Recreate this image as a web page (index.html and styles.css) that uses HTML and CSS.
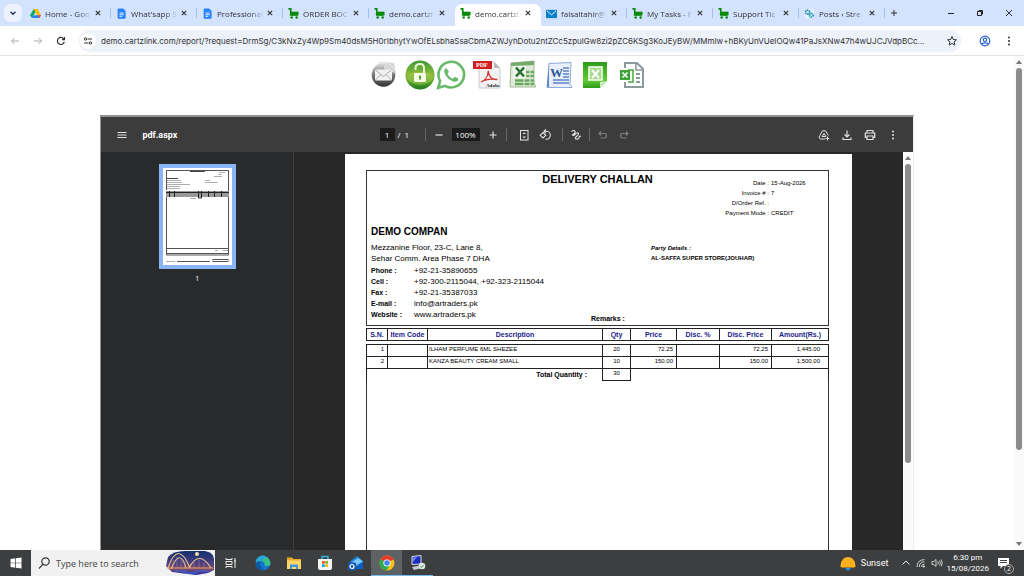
FILE: index.html
```html
<!DOCTYPE html>
<html lang="en">

<head>
    <meta charset="UTF-8">
    <meta name="viewport" content="width=device-width, initial-scale=1.0">
    <title>demo.cartzlink.com</title>
    <link rel="stylesheet" href="styles.css">
</head>

<body>
    <!-- shared icons -->
    <svg class="sprite" width="0" height="0">
        <symbol id="cart" viewBox="0 0 12 12">
            <path d="M0.500 1h2.500v6.500h7.500" fill="none" stroke="#0a8a0a" stroke-width="1.800" />
            <path d="M3 4H11.500V8H3z" fill="#0a8a0a" />
            <circle cx="4" cy="10.300" r="1.400" fill="#0a8a0a" />
            <circle cx="9.500" cy="10.300" r="1.400" fill="#0a8a0a" />
        </symbol>
        <symbol id="doc" viewBox="0 0 12 12">
            <path d="M2.800 0.500h5l2.700 2.700v7.500q0 1-1 1h-6.700q-1 0-1-1v-9.200q0-1 1-1z" fill="#2684fc" />
            <path d="M3.800 5.500h4.600M3.800 7.300h4.600M3.800 9.100h3" stroke="#fff" stroke-width="0.900" />
        </symbol>
        <symbol id="close" viewBox="0 0 8 8">
            <path d="M1.800 1.800l4.400 4.400M6.200 1.800L1.800 6.200" stroke="#333" stroke-width="1.100" />
        </symbol>
    </svg>

    <nav class="tabs">
        <button class="tab-search" aria-label="Search tabs"><svg width="8" height="8" viewBox="0 0 8 8"><path d="M1.500 2.800L4 5.200l2.500-2.400" fill="none" stroke="#1f3050" stroke-width="1.400" /></svg></button>
        <div class="tab">
            <svg class="favicon" viewBox="0 0 12 12"><path d="M4 1h4L4 8 2 11 0 8z" fill="#11a861" /><path d="M4 1h4l4 7H8z" fill="#ffba00" /><path d="M4 8h8l-2 3H2z" fill="#2684fc" /><path d="M8 8h4l-2 3z" fill="#ea4335" /></svg>
            <span class="tab-title">Home - Goo</span>
            <button class="tab-close" aria-label="Close"><svg><use href="#close" /></svg></button>
        </div>
        <div class="tab">
            <svg class="favicon"><use href="#doc" /></svg>
            <span class="tab-title">What'sapp S</span>
            <button class="tab-close" aria-label="Close"><svg><use href="#close" /></svg></button>
        </div>
        <div class="tab">
            <svg class="favicon"><use href="#doc" /></svg>
            <span class="tab-title">Professional</span>
            <button class="tab-close" aria-label="Close"><svg><use href="#close" /></svg></button>
        </div>
        <div class="tab">
            <svg class="favicon"><use href="#cart" /></svg>
            <span class="tab-title">ORDER BOC</span>
            <button class="tab-close" aria-label="Close"><svg><use href="#close" /></svg></button>
        </div>
        <div class="tab before-active">
            <svg class="favicon"><use href="#cart" /></svg>
            <span class="tab-title">demo.cartzl</span>
            <button class="tab-close" aria-label="Close"><svg><use href="#close" /></svg></button>
        </div>
        <div class="tab active">
            <svg class="favicon"><use href="#cart" /></svg>
            <span class="tab-title">demo.cartzl</span>
            <button class="tab-close" aria-label="Close"><svg><use href="#close" /></svg></button>
        </div>
        <div class="tab">
            <svg class="favicon" viewBox="0 0 12 12"><rect y="2" width="12" height="9" fill="#0c7fc9" /><path d="M1 3l5 4.500L11 3" fill="none" stroke="#fff" /></svg>
            <span class="tab-title">faisaltahir@</span>
            <button class="tab-close" aria-label="Close"><svg><use href="#close" /></svg></button>
        </div>
        <div class="tab">
            <svg class="favicon"><use href="#cart" /></svg>
            <span class="tab-title">My Tasks - F</span>
            <button class="tab-close" aria-label="Close"><svg><use href="#close" /></svg></button>
        </div>
        <div class="tab">
            <svg class="favicon"><use href="#cart" /></svg>
            <span class="tab-title">Support Tic</span>
            <button class="tab-close" aria-label="Close"><svg><use href="#close" /></svg></button>
        </div>
        <div class="tab">
            <svg class="favicon" viewBox="0 0 12 12"><path d="M1 1h8l2 2v8H1z" fill="#e8f3f8" /><circle cx="4" cy="4.500" r="2.200" fill="none" stroke="#1d8cb5" stroke-width="2" stroke-dasharray="1.500 0.600" /><circle cx="8" cy="8" r="2" fill="none" stroke="#2b9fc7" stroke-width="2" stroke-dasharray="1.500 0.600" /></svg>
            <span class="tab-title">Posts ‹ Stre</span>
            <button class="tab-close" aria-label="Close"><svg><use href="#close" /></svg></button>
        </div>
        <button class="new-tab" aria-label="New tab"><svg width="10" height="10" viewBox="0 0 10 10"><path d="M5 2v6M2 5h6" stroke="#333" /></svg></button>
        <div class="window-buttons">
            <button aria-label="Minimize"><svg width="8" height="8" viewBox="0 0 8 8"><path d="M1 4.500h6" stroke="#222" /></svg></button>
            <button aria-label="Restore"><svg width="8" height="8" viewBox="0 0 8 8"><path d="M1.500 2.500h4v4h-4zM3 2.500v-1h3.500V5H5.500" fill="none" stroke="#222" /></svg></button>
            <button aria-label="Close window"><svg width="8" height="8" viewBox="0 0 8 8"><path d="M1 1l6 6M7 1L1 7" stroke="#222" stroke-width="0.900" /></svg></button>
        </div>
    </nav>

    <header class="toolbar">
        <button aria-label="Back"><svg width="10" height="10" viewBox="0 0 10 10"><path d="M9 5H1.500M4.500 2L1.500 5l3 3" fill="none" stroke="#aaa" /></svg></button>
        <button aria-label="Forward"><svg width="10" height="10" viewBox="0 0 10 10"><path d="M1 5h7.500M5.500 2l3 3-3 3" fill="none" stroke="#aaa" /></svg></button>
        <button aria-label="Reload"><svg width="10" height="10" viewBox="0 0 10 10"><path d="M8.300 6a3.500 3.500 0 1 1-.600-3.200M8.500 1v2.600H5.900" fill="none" stroke="#333" stroke-width="1.200" /></svg></button>
        <div class="address">
            <button class="site-info" aria-label="Site information"><svg width="10" height="10" viewBox="0 0 10 10"><path d="M4.500 3H9M1 7h4.500" stroke="#333" stroke-width="1.100" /><circle cx="2.500" cy="3" r="1.200" fill="none" stroke="#333" /><circle cx="7.500" cy="7" r="1.200" fill="none" stroke="#333" /></svg></button>
            <input type="text" aria-label="Address" value="demo.cartzlink.com/report/?request=DrmSg/C3kNxZy4Wp9Sm40dsM5H0rIbhytYwOfELsbhaSsaCbmAZWJyhDotu2ntZCc5zpulGw8zi2pZC6KSg3KoJEyBW/MMmIw+hBKyUnVUeIOQw41PaJsXNw47h4wUJCJVdpBCc...">
            <button aria-label="Bookmark"><svg width="12" height="12" viewBox="0 0 12 12"><path d="M6 1.500l1.300 3 3.200.300-2.400 2.100.700 3.200L6 8.400l-2.800 1.700.700-3.200L1.500 4.800l3.200-.300z" fill="none" stroke="#333" /></svg></button>
        </div>
        <button class="profile" aria-label="Profile"><svg width="12" height="12" viewBox="0 0 12 12"><g fill="none" stroke="#2a62d0" stroke-width="1.200"><circle cx="6" cy="6" r="4.800" /><circle cx="6" cy="4.800" r="1.700" /><path d="M2.700 9q3.300-2.400 6.600 0" /></g></svg></button>
        <button aria-label="Menu"><svg width="10" height="10" viewBox="0 0 10 10" fill="#333"><circle cx="5" cy="1.500" r="1" /><circle cx="5" cy="5" r="1" /><circle cx="5" cy="8.500" r="1" /></svg></button>
    </header>

    <main class="content">
        <div class="report">
            <div class="export-bar">
                <button aria-label="E-mail">
                    <svg viewBox="0 0 30 30">
                        <defs><linearGradient id="grey" x2="0" y2="1"><stop offset="0" stop-color="#ddd" /><stop offset="0.500" stop-color="#777" /><stop offset="1" stop-color="#333" /></linearGradient></defs>
                        <path d="M10 2l15 1 2 12-8 2z" fill="#d4d4d4" />
                        <circle cx="14.500" cy="15" r="12.500" fill="#efefef" />
                        <circle cx="14.500" cy="15" r="11.700" fill="url(#grey)" />
                        <path d="M15 3.300q8 0 11 10L15 9z" fill="#d8d8d8" />
                        <rect x="6" y="9.500" width="17" height="11" rx="1" fill="#f1f1f1" />
                        <path d="M6.500 10l8 6.500 8-6.500M6.500 20l5.500-5.500M22.500 20L17 14.500" fill="none" stroke="#aaa" />
                    </svg>
                </button>
                <button class="joined" aria-label="Unlock">
                    <svg viewBox="0 0 30 30">
                        <defs><linearGradient id="lime" x2="0" y2="1"><stop offset="0" stop-color="#3f9a35" /><stop offset="0.450" stop-color="#86b838" /><stop offset="0.700" stop-color="#5ca52a" /><stop offset="1" stop-color="#1d7a1e" /></linearGradient></defs>
                        <circle cx="15" cy="15" r="14.500" fill="url(#lime)" />
                        <path d="M1.500 16q13-9 27 0a13.500 9 0 0 1-27 0z" fill="#b4d65a" opacity="0.400" />
                        <path d="M10.500 10V8q0-4 4.500-4 4 0 4 4v5" fill="none" stroke="#e9f6d5" stroke-width="2" />
                        <rect x="9" y="13" width="12" height="9" rx="1" fill="#f3fae6" />
                        <path d="M15 15.500v4" stroke="#5aa32a" stroke-width="2" />
                    </svg>
                </button>
                <button aria-label="WhatsApp">
                    <svg viewBox="0 0 30 30">
                        <path d="M2.200 27.800l1.900-6.900a12.800 12.800 0 1 1 4.900 4.900z" fill="#fff" stroke="#67b868" stroke-width="2.600" />
                        <path d="M10.500 8.200c-2.500.600-2.800 3.200-1.500 5.800 2 4 5 6.600 9 7.700 2.500.500 4.200-.800 4.300-3.200l-3.500-1.800-1.900 2c-2.500-.900-4.300-2.600-5.400-5l1.400-1.900z" fill="#67b868" />
                    </svg>
                </button>
                <button aria-label="PDF">
                    <svg viewBox="0 0 30 30">
                        <path d="M7 2h15l6 6v20H7z" fill="#f3f3f3" stroke="#ccc" />
                        <path d="M22 2l6 6h-6z" fill="#bbb" />
                        <rect x="1" y="1" width="19" height="8" fill="#cf1f1f" />
                        <text x="4" y="7" class="pdf-mark">PDF</text>
                        <path d="M9 22c4-1.500 7-6 7.300-11 .200 5 3 8.500 9 8.500-6-.800-12-.200-16.300 2.500z" fill="none" stroke="#d23030" stroke-width="1.300" />
                        <text x="14" y="27" class="adobe-mark">Adobe</text>
                    </svg>
                </button>
                <button aria-label="Excel">
                    <svg viewBox="0 0 30 30">
                        <path d="M3 3l23-2v22l2 4H2z" fill="#dfead8" stroke="#9fbd91" />
                        <path d="M3 3l23-2v4L3 6z" fill="#76a76a" />
                        <path d="M18 12h8M18 16h8M7 20.500h19M7 24h19" stroke="#6ba85e" stroke-width="2.600" />
                        <path d="M22 10v16M16 19v7" stroke="#dfead8" />
                        <rect x="5" y="6" width="13" height="12" fill="#eef5ea" />
                        <path d="M8 7.500l8 9M16 7.500l-8 9" stroke="#2c7035" stroke-width="2.600" />
                    </svg>
                </button>
                <button aria-label="Word">
                    <svg viewBox="0 0 30 30">
                        <path d="M5 3.500l22-1-1 22 2 3H3z" fill="#e8effa" stroke="#8fa9d8" />
                        <path d="M5 4v23H3z" fill="#5b82c4" />
                        <path d="M19 8h6M19 11h6M19 14h6M19 17h6M9 20h16M9 23h16" stroke="#5f83c6" stroke-width="1.400" />
                        <path d="M6 6h13v12H6z" fill="#e8effa" />
                        <text x="6" y="17" class="word-mark">W</text>
                    </svg>
                </button>
                <button aria-label="Excel sheet">
                    <svg viewBox="0 0 30 30">
                        <defs><linearGradient id="green" x2="0" y2="1"><stop offset="0" stop-color="#2c9b1c" /><stop offset="0.700" stop-color="#62cc34" /><stop offset="1" stop-color="#2c9b1c" /></linearGradient></defs>
                        <path d="M3 2h24v19l-7 7H3z" fill="url(#green)" />
                        <path d="M20 28v-6l7-1z" fill="#cdeec0" />
                        <rect x="9" y="7" width="13" height="13" fill="#a5dc90" stroke="#f3fbef" stroke-width="1.600" />
                        <path d="M12 10l7 8M19 10l-7 8" stroke="#fff" stroke-width="2" />
                    </svg>
                </button>
                <button aria-label="Excel data">
                    <svg viewBox="0 0 30 30">
                        <path d="M9 8V3h12l6 6v18H9v-5" fill="#fff" stroke="#8b9a9d" stroke-width="2" />
                        <path d="M20 3v7h7" fill="none" stroke="#8b9a9d" stroke-width="1.600" />
                        <path d="M20 14h4M20 18h4M20 22h4" stroke="#8b9a9d" stroke-width="2" />
                        <path d="M12 10h5v12h-5" fill="none" stroke="#45a83c" stroke-width="1.500" />
                        <rect x="4" y="10" width="10" height="10" fill="#3da437" />
                        <path d="M6.500 12.500l5 5M11.500 12.500l-5 5" stroke="#fff" stroke-width="1.600" />
                    </svg>
                </button>
            </div>

            <section class="viewer">
                <div class="viewer-bar">
                    <div class="viewer-name">
                        <button aria-label="Sidebar"><svg viewBox="0 0 12 12"><path d="M1.500 3.500h9M1.500 6h9M1.500 8.500h9" stroke="#e3e3e3" /></svg></button>
                        <span>pdf.aspx</span>
                    </div>
                    <div class="viewer-controls">
                        <input class="page-number" type="text" aria-label="Page" value="1">
                        <span class="page-count">/ &nbsp;1</span>
                        <span class="sep"></span>
                        <button aria-label="Zoom out"><svg viewBox="0 0 12 12"><path d="M2.500 6h7" stroke="#e3e3e3" stroke-width="1.200" /></svg></button>
                        <input class="zoom-level" type="text" aria-label="Zoom" value="100%">
                        <button aria-label="Zoom in"><svg viewBox="0 0 12 12"><path d="M2.500 6h7M6 2.500v7" stroke="#e3e3e3" stroke-width="1.200" /></svg></button>
                        <span class="sep"></span>
                        <button class="fit" aria-label="Fit to page"><svg viewBox="0 0 12 12"><rect x="2.500" y="1.500" width="7.500" height="9.500" fill="none" stroke="#e3e3e3" /><path d="M4.500 5L6.200 3.200 8 5zM4.500 7.500l1.700 1.800L8 7.500z" fill="#e3e3e3" /></svg></button>
                        <button class="rotate" aria-label="Rotate"><svg viewBox="0 0 12 12"><path d="M4 3.500L6.800 6.300 4 9 1.200 6.300z" fill="none" stroke="#e3e3e3" stroke-width="1.100" /><path d="M5 2.300h2.300a4 4 0 0 1 0 8H6.500M6.800.500L5 2.300l1.800 1.800" fill="none" stroke="#e3e3e3" stroke-width="1.100" /></svg></button>
                        <span class="sep wide"></span>
                        <button aria-label="Draw"><svg viewBox="0 0 12 12"><path d="M1.500 2.500q3-2 3.500 0T2.500 5.800q.500 1.500 3-.800t3-.500q.500 1-2 3t0 2.500 2.500-1.500 2-1" fill="none" stroke="#e3e3e3" stroke-width="1.100" /></svg></button>
                        <span class="sep"></span>
                        <button class="dim" aria-label="Undo"><svg viewBox="0 0 12 12"><path d="M4 2.500L2 4.500l2 2M2 4.500h5.500q2 0 2 2.200t-2 2.300H3.500" fill="none" stroke="#e3e3e3" stroke-width="1.100" /></svg></button>
                        <button class="dim redo" aria-label="Redo"><svg viewBox="0 0 12 12"><path d="M8 2.500l2 2-2 2M10 4.500H4.500q-2 0-2 2.200t2 2.300h4" fill="none" stroke="#e3e3e3" stroke-width="1.100" /></svg></button>
                    </div>
                    <div class="viewer-actions">
                        <button aria-label="Save to Drive"><svg viewBox="0 0 12 12"><path d="M7 10H2.200L1 8l3.500-6.200h3L10.300 6.500M4 7.800l2-3.500L7.800 7.500H4M9.500 7.500v4M7.500 9.500h4" fill="none" stroke="#e3e3e3" /></svg></button>
                        <button aria-label="Download"><svg viewBox="0 0 12 12"><path d="M6 1.500V8M3.500 5.500L6 8l2.500-2.500M2 8.500v2h8v-2" fill="none" stroke="#e3e3e3" stroke-width="1.200" /></svg></button>
                        <button aria-label="Print"><svg viewBox="0 0 12 12"><path d="M3 4V1.500h6V4M3 8.500H1.300V4h9.400v4.500H9M3 7h6v3.500H3z" fill="none" stroke="#e3e3e3" stroke-width="1.200" /></svg></button>
                        <button aria-label="More"><svg viewBox="0 0 12 12" fill="#e3e3e3"><circle cx="6" cy="2.500" r="1" /><circle cx="6" cy="6" r="1" /><circle cx="6" cy="9.500" r="1" /></svg></button>
                    </div>
                </div>

                <div class="viewer-body">
                    <aside class="thumbs">
                        <button class="thumb" aria-label="Page 1">
                            <svg viewBox="0 0 69 97">
                                <rect width="69" height="97" fill="#fff" />
                                <g fill="none" stroke="#555">
                                    <path d="M3.500 22V2.500h62V23M3.500 23v64h62V23" />
                                    <path d="M3 80.500h63M3 85.500h63" />
                                    <path d="M14 93.500h33" />
                                    <rect x="50" y="91.500" width="15" height="2" />
                                </g>
                                <rect x="3" y="23" width="63" height="6" fill="#999" />
                                <path d="M3 24.500h63M6.500 23v6M11.500 23v6M35.500 23v7h3v-7M45.500 23v6M51.500 23v6M58.500 23v6" stroke="#222" fill="none" />
                                <path d="M27 3.500h15M4 10.500h11" stroke="#444" />
                                <path d="M56 4.500h6M55 6.500h4M51 8.500h8M42 12.500h5M42 14.500h13M4 12.500h14M4 14.500h15M4 16.500h23M4 18.500h13M4 20.500h13M27 30.500h6M52 82.500h3M60 82.500h5M3 93.500h9" stroke="#999" stroke-width="0.800" />
                            </svg>
                        </button>
                        <span>1</span>
                    </aside>

                    <div class="pages">
                        <article class="page">
                            <div class="challan">
                                <div class="challan-top">
                                    <h1>DELIVERY CHALLAN</h1>
                                    <dl class="meta">
                                        <dt>Date :</dt><dd>15-Aug-2026</dd>
                                        <dt>Invoice # :</dt><dd>7</dd>
                                        <dt>D/Order Ref. :</dt><dd></dd>
                                        <dt>Payment Mode :</dt><dd>CREDIT</dd>
                                    </dl>
                                </div>
                                <div class="challan-info">
                                    <div class="company">
                                        <h2>DEMO COMPAN</h2>
                                        <p>Mezzanine Floor, 23-C, Lane 8,<br>Sehar Comm. Area Phase 7 DHA</p>
                                        <dl>
                                            <dt>Phone :</dt><dd>+92-21-35890655</dd>
                                            <dt>Cell :</dt><dd>+92-300-2115044, +92-323-2115044</dd>
                                            <dt>Fax :</dt><dd>+92-21-35387033</dd>
                                            <dt>E-mail :</dt><dd>info@artraders.pk</dd>
                                            <dt>Website :</dt><dd>www.artraders.pk</dd>
                                        </dl>
                                    </div>
                                    <div class="remarks">Remarks :</div>
                                    <div class="party">
                                        <em>Party Details :</em>
                                        <strong>AL-SAFFA SUPER STORE(JOUHAR)</strong>
                                    </div>
                                </div>
                            </div>

                            <table class="items">
                                <colgroup>
                                    <col class="c-sn"><col class="c-code"><col><col class="c-qty"><col class="c-price"><col class="c-disc"><col class="c-dprice"><col class="c-amount">
                                </colgroup>
                                <thead>
                                    <tr><th>S.N.</th><th>Item Code</th><th>Description</th><th>Qty</th><th>Price</th><th>Disc. %</th><th>Disc. Price</th><th>Amount(Rs.)</th></tr>
                                </thead>
                                <tbody>
                                    <tr class="gap"><td colspan="8"></td></tr>
                                    <tr><td class="num">1</td><td></td><td>ILHAM PERFUME 6ML SHEZEE</td><td class="qty">20</td><td class="num">72.25</td><td></td><td class="num">72.25</td><td class="num amount">1,445.00</td></tr>
                                    <tr><td class="num">2</td><td></td><td>KANZA BEAUTY CREAM SMALL</td><td class="qty">10</td><td class="num">150.00</td><td></td><td class="num">150.00</td><td class="num amount">1,500.00</td></tr>
                                </tbody>
                                <tfoot>
                                    <tr><th colspan="3">Total Quantity :</th><td class="qty">30</td><td colspan="4" class="rest"></td></tr>
                                </tfoot>
                            </table>
                            <div class="blank"></div>
                        </article>
                    </div>
                    <div class="scrollbar"><i class="up"></i><i class="bar"></i></div>
                </div>
            </section>
        </div>
        <div class="scrollbar page-scroll"><i class="up"></i><i class="bar"></i><i class="down"></i></div>
    </main>

    <footer class="taskbar">
        <button class="start" aria-label="Start"><svg width="12" height="12" viewBox="0 0 12 12" fill="#fff"><path d="M.500 2l4.800-.700v4.400H.500zM6 1.200L11.500.400v5.300H6zM.500 6.300h4.800v4.400L.500 10zM6 6.300h5.500v5.300L6 10.800z" /></svg></button>
        <div class="search">
            <svg width="14" height="14" viewBox="0 0 14 14"><circle cx="8.500" cy="5.500" r="3.700" fill="none" stroke="#333" stroke-width="1.200" /><path d="M6 8.200L2 12.500" stroke="#333" stroke-width="1.200" /></svg>
            <input type="text" aria-label="Search" placeholder="Type here to search">
            <svg class="bridge" viewBox="0 0 50 24">
                <defs><linearGradient id="dusk" x2="0" y2="1"><stop offset="0" stop-color="#14306e" /><stop offset="0.500" stop-color="#4a3f83" /><stop offset="0.750" stop-color="#7b4a66" /><stop offset="1" stop-color="#1b2cac" /></linearGradient></defs>
                <path d="M3 6Q8 0 20 0h20q9 2 9 8v11l-6 3-12 2-24-3-6-6z" fill="url(#dusk)" />
                <circle cx="32" cy="3" r="2" fill="#f5dca8" />
                <path d="M3 17Q13-12 25 17M24 17Q34-2 46 17M6 18q9-22 15-1" fill="none" stroke="#e9c08b" stroke-width="1.200" />
                <path d="M8 9v8M12 6v11M16 7v10M20 10v7M29 11v6M34 9v8M39 11v6" stroke="#b58a8a" stroke-width="0.500" />
                <path d="M2 17h46" stroke="#e8a36f" stroke-width="1.200" />
                <path d="M10 20h12M18 22h14M30 20h14" stroke="#4667e0" />
            </svg>
        </div>
        <button class="app task-view" aria-label="Task view"><svg viewBox="0 0 16 16" fill="none" stroke="#eee"><path d="M3 3v1.500h6V3M3 13v-1.500h6V13M3 6.500h6v3H3zM12 3v2M12 7v6" /><path d="M11 6h2" stroke-width="1.600" /></svg></button>
        <button class="app" aria-label="Edge"><svg viewBox="0 0 16 16"><circle cx="8" cy="8" r="7.500" fill="#1674c9" /><path d="M.700 7A7.500 7.500 0 0 1 15.500 8q0 3-3.500 3-3 0-2.500-2 0-3-4-3-3.500 0-4.800 1z" fill="#39c08a" /><path d="M.700 7A7.500 7.500 0 0 1 11 1.200L7 5.800q-4-.500-6.300 1.200z" fill="#2aa6d8" /><path d="M5.500 7q-2 5 4 7.500Q2 16 1 9q1-3 4.500-2z" fill="#0c59a4" /></svg></button>
        <button class="app" aria-label="Explorer"><svg viewBox="0 0 16 16"><path d="M1 2.500h5l1.500 1.500H15v10H1z" fill="#e9a825" /><path d="M1 5.500h14V14H1z" fill="#ffd766" /><path d="M4 14V9.500h8V14h-2v-2H6v2z" fill="#3e9ade" /></svg></button>
        <button class="app" aria-label="Store"><svg viewBox="0 0 16 16"><path d="M5 4V1.500h6V4" fill="none" stroke="#3bb4e5" stroke-width="1.500" /><path d="M1 4h14v9q0 2-2 2H3q-2 0-2-2z" fill="#f4f4f4" /><path d="M5 6h2.700v2.700H5z" fill="#f25022" /><path d="M8.300 6H11v2.700H8.300z" fill="#7fba00" /><path d="M5 9.300h2.700V12H5z" fill="#00a4ef" /><path d="M8.300 9.300H11V12H8.300z" fill="#ffb900" /></svg></button>
        <button class="app" aria-label="Outlook"><svg viewBox="0 0 16 16"><path d="M2 6.500l7-5.500 6 5v8H3z" fill="#1c86e0" /><path d="M3 8l7-5 5 3.500-8 4.500z" fill="#7cc8f8" /><path d="M15 6.500V14H5z" fill="#0f5fc0" /><rect y="7.500" width="8" height="8" rx="1" fill="#1257ad" /><circle cx="4" cy="11.500" r="2" fill="none" stroke="#fff" stroke-width="1.200" /></svg></button>
        <button class="app current" aria-label="Chrome"><svg viewBox="0 0 16 16"><circle cx="8" cy="8" r="7.500" fill="#fbc116" /><path d="M8 8L1.500 4.200A7.500 7.500 0 0 1 14.500 4.200z" fill="#e33b2e" /><path d="M8 8L1.500 4.200A7.500 7.500 0 0 0 7.500 15.500l3-5z" fill="#2da94f" /><path d="M8 4.200h6.500" stroke="#e33b2e" /><circle cx="8" cy="8" r="3.600" fill="#fff" /><circle cx="8" cy="8" r="2.800" fill="#4285f4" /></svg></button>
        <button class="app running" aria-label="Remote desktop"><svg viewBox="0 0 16 16"><path d="M2 1.500l9-1v8.500L2 9.500z" fill="#1c2fb8" stroke="#d8dce8" /><path d="M3 2.500l4-.500-4 5z" fill="#6d87ee" /><path d="M2 12l8-1.500 2 2.500-8 2z" fill="#c6cad2" /><circle cx="12" cy="11" r="3.300" fill="#dfe9df" /><path d="M10.300 11.500l1.200 1 2.200-2.500" fill="none" stroke="#4f9050" /></svg></button>

        <div class="tray">
            <button class="weather"><svg width="16" height="16" viewBox="0 0 16 16"><path d="M.500 10.500a7.500 8.500 0 0 1 15 0q0 2-1 2h-13q-1 0-1-2z" fill="#fdb11c" /><path d="M5 13h6l-3 3z" fill="#1e90e8" /></svg>Sunset</button>
            <button aria-label="Hidden icons"><svg width="10" height="10" viewBox="0 0 10 10"><path d="M1.500 6.500L5 3l3.500 3.500" fill="none" stroke="#eee" /></svg></button>
            <button aria-label="Network"><svg width="10" height="10" viewBox="0 0 10 10" fill="none" stroke="#ddd" stroke-width="0.900"><path d="M1 9q0-7 7.500-7.500M3.300 9q0-5 5.200-5.300M5.500 9q0-2.800 3-3" /><circle cx="7.800" cy="8.500" r="0.700" fill="#eee" /></svg></button>
            <button aria-label="Volume"><svg width="12" height="10" viewBox="0 0 12 10" fill="none" stroke="#ddd"><path d="M1 3.500h1.800L5 1.500v7l-2.200-2H1zM6.800 3.500q1 1.500 0 3M8.500 2.500q1.800 2.500 0 5M10.200 1.500q2 3.500 0 7" stroke-width="0.900" /></svg></button>
            <button class="clock">6:30 pm<br>15/08/2026</button>
            <button class="notify" aria-label="Notifications"><svg width="14" height="14" viewBox="0 0 14 14"><path d="M1 2h11v8H6l-2.500 2.500V10H1z" fill="#fff" /><path d="M3 4.500h7M3 6.500h7" stroke="#444" /></svg><span class="badge">2</span></button>
        </div>
    </footer>
</body>

</html>
```
FILE: styles.css
```css
* {
    box-sizing: border-box;
}

body {
    display: flex;
    flex-direction: column;
    height: 100vh;
    margin: 0;
    overflow: hidden;
    font-family: "Open Sans", "Noto Sans", sans-serif;
    font-size: 8px;
    color: #333;
    background-color: #fff;
}

button {
    display: flex;
    align-items: center;
    justify-content: center;
    padding: 0;
    border: none;
    background: none;
    color: inherit;
    font: inherit;
    cursor: pointer;
}

input {
    min-width: 0;
    padding: 0;
    border: none;
    outline: none;
    background: none;
    color: inherit;
    font: inherit;
}

svg {
    display: block;
    flex: none;
}

dl, dd, p, h1, h2 {
    margin: 0;
}

.sprite {
    position: absolute;
}

/* browser tabs */
.tabs {
    display: flex;
    align-items: flex-end;
    height: 26px;
    padding-left: 4px;
    background-color: #d3e2fd;
}

.tab-search {
    width: 18px;
    height: 18px;
    margin: 0 3px 4px 0;
    border-radius: 6px;
    background-color: #ecf3fe;
}

.tab {
    display: flex;
    align-items: center;
    width: 86px;
    height: 22px;
    padding: 0 8px 4px 5px;
}

.tab::after {
    content: "";
    width: 1px;
    height: 10px;
    margin-right: -8px;
    margin-left: 8px;
    background-color: #9fc1f5;
}

.tab.active {
    border-radius: 7px 7px 0 0;
    background-color: #fff;
}

.tab.active::after,
.tab.before-active::after {
    background-color: transparent;
}

.favicon {
    width: 11px;
    height: 11px;
}

.tab-title {
    flex: 1;
    min-width: 0;
    margin: 0 2px 0 4px;
    white-space: nowrap;
    -webkit-mask-image: linear-gradient(to right, #000 70%, transparent);
    mask-image: linear-gradient(to right, #000 70%, transparent);
}

.tab-close svg {
    width: 8px;
    height: 8px;
}

.new-tab {
    width: 18px;
    height: 18px;
    margin-bottom: 4px;
}

.window-buttons {
    display: flex;
    gap: 21px;
    margin: 0 11px 9px auto;
}

/* address bar */
.toolbar {
    display: flex;
    align-items: center;
    gap: 13px;
    height: 30px;
    padding: 0 10px;
    border-bottom: 1px solid #e4e4e4;
}

.address {
    display: flex;
    flex: 1;
    align-items: center;
    height: 22px;
    padding: 0 3px 0 1px;
    border-radius: 11px;
    background-color: #ecf1fa;
}

.address input {
    flex: 1;
    margin: 0 3px 0 5px;
    font-family: Inter, Roboto, sans-serif;
}

.site-info {
    width: 16px;
    height: 16px;
    border-radius: 8px;
    background-color: #fff;
}

.profile {
    margin-left: 5px;
}

/* page */
.content {
    display: flex;
    flex: 1;
    min-height: 0;
}

.report {
    display: flex;
    flex: 1;
    flex-direction: column;
    align-items: center;
    min-height: 0;
}

.export-bar {
    display: flex;
    gap: 6px;
    padding: 4px 0 25px;
}

.export-bar svg {
    width: 30px;
    height: 30px;
}

.export-bar .joined {
    margin-right: -5px;
}

.pdf-mark {
    font: bold 6px "Liberation Serif", serif;
    fill: #fff;
}

.adobe-mark {
    font: bold 5px "Liberation Serif", serif;
    fill: #222;
}

.word-mark {
    font: bold 13px "Liberation Serif", serif;
    fill: #2b5797;
}

/* pdf viewer */
.viewer {
    display: flex;
    flex: 1;
    flex-direction: column;
    box-sizing: content-box;
    width: 80%;
    min-height: 0;
    border: solid #8f9492;
    border-width: 2px 1px 0 1px;
    border-right-color: #eee;
}

.viewer-bar {
    display: grid;
    grid-template-columns: 1fr auto 1fr;
    align-items: center;
    height: 35px;
    padding: 0 14px 0 15px;
    background-color: #3c3c3c;
    color: #fff;
}

.viewer-bar svg {
    width: 12px;
    height: 12px;
}

.viewer-name {
    display: flex;
    align-items: center;
    gap: 14px;
    font-family: Roboto, sans-serif;
    font-size: 9px;
    font-weight: bold;
}

.viewer-controls {
    display: flex;
    align-items: center;
    gap: 7px;
    margin-right: 6px;
}

.viewer-controls input {
    height: 13px;
    background-color: #1c1c1c;
    text-align: center;
}

.page-number {
    width: 15px;
}

.zoom-level {
    width: 28px;
}

.page-count {
    width: 20px;
    margin-left: -4px;
}

.sep {
    width: 1px;
    height: 13px;
    background-color: #666;
}

.sep.wide,
.fit {
    margin-left: 4px;
}

.rotate,
.redo {
    margin-left: 2px;
}

.dim {
    opacity: 0.4;
}

.viewer-actions {
    display: flex;
    justify-content: flex-end;
    gap: 11px;
}

.viewer-body {
    display: flex;
    flex: 1;
    min-height: 0;
    background-color: #282828;
}

.thumbs {
    display: flex;
    flex: none;
    flex-direction: column;
    align-items: center;
    width: 193px;
    padding-top: 12px;
    border-right: 1px solid #3f3f3f;
    background-color: #282a2c;
    color: #eee;
}

.thumb {
    margin-bottom: 3px;
    border: 4px solid #8ab4f8;
}

.thumb svg {
    width: 69px;
    height: 97px;
}

.pages {
    display: flex;
    flex: 1;
    justify-content: center;
    overflow: hidden;
    padding-top: 2px;
}

.page {
    display: flex;
    flex: none;
    flex-direction: column;
    width: 507px;
    padding: 16px 23px 0 21px;
    background-color: #fff;
    color: #000;
    font-family: "Liberation Sans", Arial, sans-serif;
}

/* delivery challan */
.challan {
    height: 156px;
    margin-bottom: 2px;
    padding: 3px 4px 0;
    border: 1px solid #333;
}

.challan-top {
    display: grid;
    grid-template-columns: 1fr auto 1fr;
}

.challan h1 {
    grid-column: 2;
    font-size: 11px;
    line-height: 10px;
}

.meta {
    display: grid;
    grid-template-columns: 1fr 53px;
    grid-auto-rows: 10px;
    column-gap: 2px;
    padding-top: 4px;
    font-size: 6px;
    line-height: 10px;
}

.meta dt {
    text-align: right;
}

.challan-info {
    display: flex;
    margin-top: 8px;
}

.company {
    width: 220px;
    font-size: 8px;
    line-height: 11px;
}

.company h2 {
    margin-bottom: 4px;
    font-size: 10px;
    line-height: 12px;
    white-space: nowrap;
}

.company dl {
    display: grid;
    grid-template-columns: 43px 1fr;
    margin-top: 1px;
    white-space: nowrap;
}

.company dt {
    font-size: 7px;
    font-weight: bold;
}

.remarks {
    align-self: flex-end;
    width: 60px;
    margin-bottom: -3px;
    font-size: 7px;
    font-weight: bold;
    line-height: 8px;
    white-space: nowrap;
}

.party {
    display: flex;
    flex-direction: column;
    padding-top: 17px;
    font-size: 6px;
    line-height: 10px;
}

.party em {
    font-weight: bold;
}

.items {
    width: 100%;
    table-layout: fixed;
    border-collapse: collapse;
    font-size: 6px;
    line-height: 8px;
}

.items th,
.items td {
    height: 12px;
    padding: 0 1px;
    border: 1px solid #222;
    white-space: nowrap;
}

.items td {
    vertical-align: top;
}

.items th {
    font-size: 7px;
}

.items thead th {
    color: #1a1a8c;
}

.items .gap td {
    height: 4px;
    border-width: 1px 0;
    line-height: 2px;
}

.c-sn {
    width: 21px;
}

.c-code {
    width: 40px;
}

.c-qty {
    width: 28px;
}

.c-price {
    width: 46px;
}

.c-disc {
    width: 43px;
}

.c-dprice {
    width: 52px;
}

.c-amount {
    width: 57px;
}

.items .num {
    padding-right: 3px;
    text-align: right;
}

.items .amount {
    padding-right: 8px;
}

.items .qty {
    text-align: center;
}

.items tfoot th {
    padding-right: 15px;
    border-bottom: none;
    text-align: right;
}

.items .rest {
    border-bottom: none;
}

.blank {
    flex: 1;
    border: solid #333;
    border-width: 0 1px;
}

/* scrollbars */
.scrollbar {
    display: flex;
    flex: none;
    flex-direction: column;
    align-items: center;
    width: 10px;
    padding-top: 4px;
    background-color: #fafafa;
}

.up,
.down {
    border: 3px solid transparent;
}

.up {
    border-top: none;
    border-bottom: 4px solid #777;
}

.down {
    margin: auto 0 4px;
    border-top: 4px solid #777;
    border-bottom: none;
}

.bar {
    width: 6px;
    height: 76%;
    margin-top: 4px;
    border-radius: 3px;
    background-color: #8b8b8b;
}

.page-scroll .bar {
    height: 78%;
}

/* taskbar */
.taskbar {
    display: flex;
    align-items: stretch;
    height: 26px;
    background-color: #3c3e3f;
    color: #fff;
}

.start {
    width: 31px;
}

.search {
    display: flex;
    align-items: center;
    width: 184px;
    padding-left: 6px;
    background-color: #f1f1f1;
    color: #333;
}

.search input {
    flex: 1;
    margin-left: 5px;
    font-size: 9px;
}

.search input::placeholder {
    color: #444;
}

.bridge {
    width: 50px;
    height: 24px;
}

.app {
    width: 31px;
    border-bottom: 1px solid transparent;
}

.task-view {
    margin-right: 1px;
}

.app svg {
    width: 16px;
    height: 16px;
}

.app.current,
.app.running {
    border-color: #76b9ed;
}

.app.current {
    background-color: #5d6364;
}

.tray {
    display: flex;
    align-items: center;
    gap: 5px;
    margin-left: auto;
    padding-right: 13px;
}

.weather {
    gap: 5px;
    margin-right: 8px;
    font-family: Roboto, sans-serif;
    font-size: 9px;
}

.clock {
    margin-left: -2px;
    font-family: Roboto, sans-serif;
    line-height: 11px;
}

.notify {
    position: relative;
    margin-left: 3px;
}

.badge {
    position: absolute;
    right: -3px;
    bottom: -4px;
    width: 10px;
    height: 10px;
    border: 1px solid #aaa;
    border-radius: 5px;
    background-color: #3c3e3f;
    font-size: 7px;
    line-height: 8px;
}
```
